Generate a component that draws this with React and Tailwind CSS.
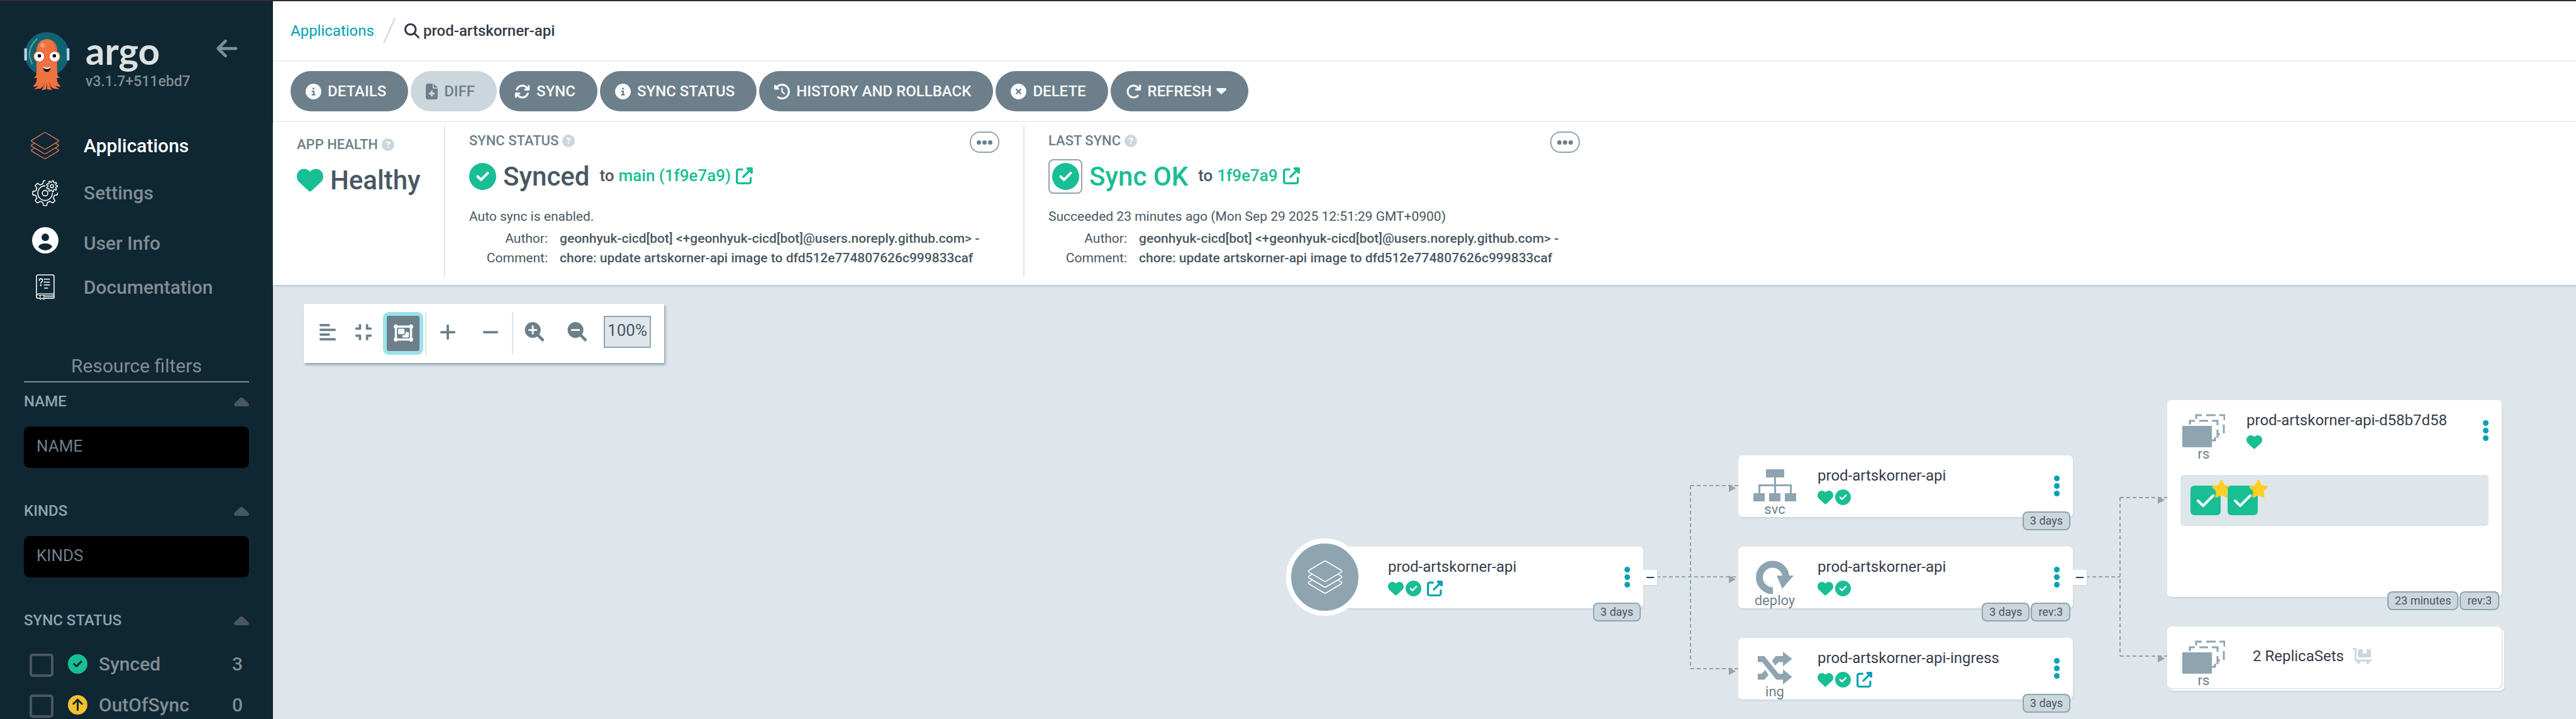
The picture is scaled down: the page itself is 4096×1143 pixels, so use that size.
import React from "react";
import {
  FaAlignLeft,
  FaArrowLeft,
  FaArrowRotateRight,
  FaArrowsRotate,
  FaCircleArrowUp,
  FaCircleCheck,
  FaCircleInfo,
  FaCircleQuestion,
  FaCircleXmark,
  FaClockRotateLeft,
  FaCompress,
  FaFileMedical,
  FaHeart,
  FaMagnifyingGlass,
  FaMinus,
  FaObjectGroup,
  FaPlus,
  FaStar,
  FaUpRightFromSquare,
} from "react-icons/fa6";

function Layers({ className, strokeWidth = 5 }) {
  return (
    <svg viewBox="0 0 174 171" className={className} fill="none" stroke="currentColor" strokeWidth={strokeWidth} strokeLinejoin="round" strokeLinecap="round" aria-hidden="true">
      <path d="M82 4q5-3 10 0l77 46q5 4 0 8l-77 46q-5 3-10 0L5 58q-5-4 0-8z" />
      <path d="M20 70L5 79q-5 4 0 8l77 46q5 3 10 0l77-46q5-4 0-8l-15-9" />
      <path d="M20 100l-15 9q-5 4 0 8l77 46q5 3 10 0l77-46q5-4 0-8l-15-9" />
    </svg>
  );
}

function gearPoints(cx, cy, outer, root, teeth, from, to) {
  const step = 360 / teeth;
  const offsets = [
    [-0.3, root],
    [-0.17, outer],
    [0, outer],
    [0.17, outer],
    [0.3, root],
    [0.4, root - 1],
  ];
  const pts = [];
  for (let i = -teeth; i <= teeth; i += 1) {
    offsets.forEach(([o, r]) => {
      const a = (i + o) * step;
      if (a >= from && a <= to) {
        const t = (a * Math.PI) / 180;
        pts.push(`${(cx + r * Math.cos(t)).toFixed(1)},${(cy + r * Math.sin(t)).toFixed(1)}`);
      }
    });
  }
  return pts.join(" ");
}

function Gears({ className }) {
  return (
    <svg viewBox="42 266 132 134" className={className} fill="none" stroke="currentColor" strokeWidth="5" strokeLinejoin="round" strokeLinecap="round" aria-hidden="true">
      <polyline points={gearPoints(107, 333, 63, 49, 8, 0, 270)} />
      <path d="M107 296a37 37 0 1 0 37 37" />
      <circle cx="107" cy="333" r="14" />
      <polygon strokeWidth="4.5" points={gearPoints(142, 298, 28, 21, 9, 0, 359)} />
      <circle cx="142" cy="298" r="8" strokeWidth="4.5" />
    </svg>
  );
}

function UserIcon({ className }) {
  return (
    <svg viewBox="0 0 134 134" className={className} aria-hidden="true">
      <circle cx="67" cy="67" r="67" fill="#fff" />
      <circle cx="67" cy="52" r="19" fill="#0f2733" />
      <path d="M31 100q10-17 36-17t36 17q-14 18-36 18t-36-18z" fill="#0f2733" />
    </svg>
  );
}

function DocsIcon({ className }) {
  return (
    <svg viewBox="0 0 96 132" className={className} fill="none" stroke="currentColor" strokeWidth="5" strokeLinejoin="round" strokeLinecap="round" aria-hidden="true">
      <path d="M20 123H12q-9 0-9-9V12q0-9 9-9h72q9 0 9 9v108q0 3-4 3H44" />
      <path d="M92 99H14q-9 2-9 10M92 107H46M92 115H46M14 107h8v22l10-7 9 7v-22M18 107h70" strokeWidth="4" />
      <path d="M42 25h28M42 40h28M42 55h28M44 71h16" />
      <path d="M17 32q1-9 8-9 9 0 9 8 0 5-5 8-4 3-4 7" />
      <circle cx="25" cy="56" r="2" />
    </svg>
  );
}

function ArgoLogo({ className }) {
  return (
    <svg viewBox="0 0 240 312" className={className} aria-hidden="true">
      <circle cx="120" cy="118" r="111" fill="#0b6670" stroke="#21577a" strokeWidth="8" />
      <rect x="2" y="88" width="14" height="64" rx="4" fill="#b7d4ec" />
      <rect x="224" y="88" width="14" height="64" rx="4" fill="#b7d4ec" />
      <path d="M68 40Q8 95 42 168" fill="none" stroke="#5a9a9f" strokeWidth="8" strokeLinecap="round" />
      <path d="M66 100C66 20 174 20 174 100V215Q176 238 190 244L172 242Q172 268 190 284L192 290L163 284L186 302L155 298Q136 292 132 262Q134 288 148 306L122 302L119 270L116 302L92 306Q106 288 108 262Q104 292 84 298L52 302L77 284L48 290L50 284Q68 268 68 242L50 244Q64 238 66 215Z" fill="#f0723f" />
      <path d="M140 50Q174 64 174 100V215Q162 170 162 100Q160 64 140 50Z" fill="#e9633c" />
      <circle cx="98" cy="72" r="12" fill="#f79a78" />
      <circle cx="80" cy="130" r="31" fill="#e2573a" />
      <circle cx="160" cy="130" r="31" fill="#e2573a" />
      <circle cx="80" cy="131" r="26" fill="#fff" />
      <circle cx="160" cy="131" r="26" fill="#fff" />
      <circle cx="81" cy="127" r="9" fill="#000" />
      <circle cx="159" cy="127" r="9" fill="#000" />
      <path d="M99 182Q120 196 141 182Q140 210 120 211Q101 210 99 182Z" fill="#111" />
      <path d="M99 182Q120 196 141 182L139 190Q120 203 101 190Z" fill="#fff" />
    </svg>
  );
}

function Caret({ className }) {
  return (
    <svg viewBox="0 0 24 15" className={className} fill="currentColor" aria-hidden="true">
      <path d="M2 15Q-1 13 1 10L10 1.500Q12 0 14 1.500L23 10Q25 13 22 15Z" />
    </svg>
  );
}

function FilledLens({ plus }) {
  return (
    <svg viewBox="0 0 32 32" className="h-[31px] w-[32px]" fill="none" aria-hidden="true">
      <circle cx="13" cy="13" r="13" fill="#6d7f8b" />
      <path d="M21 21l8 8" stroke="#6d7f8b" strokeWidth="5" strokeLinecap="round" />
      <path d={plus ? "M7 13h12M13 7v12" : "M7 13h12"} stroke="#fff" strokeWidth="3" strokeLinecap="round" />
    </svg>
  );
}

function FlatbedCart() {
  return (
    <svg viewBox="0 0 31 26" className="ml-[14px] h-[26px] w-[31px] text-[#ccd6dd]" fill="currentColor" aria-hidden="true">
      <path d="M1 1.500h2.500q1 0 1 1V18q0 2 2 2H29" fill="none" stroke="currentColor" strokeWidth="3" strokeLinecap="round" />
      <path d="M10 2h6v8l3-2 3 2V2h5q2 0 2 2v9q0 2-2 2H10q-2 0-2-2V4q0-2 2-2z" />
      <circle cx="9" cy="23" r="2.500" />
      <circle cx="24" cy="23" r="2.500" />
    </svg>
  );
}

const NAV = [
  { label: "Applications", icon: <Layers className="h-[44px] w-[45px] text-[#ef7b4d]" />, tone: "text-white" },
  { label: "Settings", icon: <Gears className="h-[42px] w-[42px] text-white" />, tone: "text-[#818d94]" },
  { label: "User Info", icon: <UserIcon className="h-[42px] w-[42px]" />, tone: "text-[#818d94] pt-[10px]" },
  { label: "Documentation", icon: <DocsIcon className="h-[41px] w-[30px] text-white" />, tone: "text-[#818d94]" },
];

function FilterHeading({ children }) {
  return (
    <button type="button" aria-expanded="true" className="flex h-[26px] w-full items-center justify-between text-[24px] leading-[26px] font-medium text-[#8fa4b1]">
      {children}
      <Caret className="h-[15px] w-[24px] text-[#495763]" />
    </button>
  );
}

function TextFilter({ name }) {
  return (
    <section className="mb-[55px]">
      <FilterHeading>{name}</FilterHeading>
      <input aria-label={name} placeholder={name} className="mt-[27px] block h-[66px] w-full rounded-[9px] bg-black px-[20px] pb-[4px] text-[26px] text-white placeholder:text-[#6d7f8b]" />
    </section>
  );
}

function StatusFilter({ label, count, icon }) {
  return (
    <label className="flex h-[65px] items-center pr-[10px] pl-[9px] text-[30px] font-medium text-[#818d94]">
      <input type="checkbox" className="mt-[3px] h-[37px] w-[38px] appearance-none rounded-[5px] border-4 border-[#495763]" />
      <span className="ml-[23px] text-[31px]">{icon}</span>
      <span className="ml-[18px] flex-1">{label}</span>
      <span>{count}</span>
    </label>
  );
}

function Sidebar() {
  return (
    <aside className="w-[434px] shrink-0 bg-[#0f2733] px-[38px]">
      <div className="flex h-[192px] pt-[48px]">
        <ArgoLogo className="h-[95px] w-[73px] shrink-0" />
        <div className="ml-[25px] flex-1">
          <div className="h-[68px] font-['Lato'] text-[60px] leading-[60px] font-bold text-[#dce0df]">argo</div>
          <div className="text-[23px] leading-[24px] font-medium text-[#818d94]">v3.1.7+511ebd7</div>
        </div>
        <button type="button" aria-label="Collapse sidebar" className="mr-[16px] h-[53px] text-[38px] text-[#818d94]">
          <FaArrowLeft />
        </button>
      </div>
      <nav>
        {NAV.map((item) => (
          <a key={item.label} href="#" className="flex h-[75px] items-center">
            <span className="flex w-[67px] justify-center">{item.icon}</span>
            <span className={"ml-[28px] text-[30px] leading-[40px] font-medium " + item.tone}>{item.label}</span>
          </a>
        ))}
      </nav>
      <div className="mt-[68px] border-b-2 border-[#818d94] pb-1 text-center text-[30px] leading-[40px] text-[#818d94]">Resource filters</div>
      <div className="pt-[17px]">
        <TextFilter name="NAME" />
        <TextFilter name="KINDS" />
        <section>
          <FilterHeading>SYNC STATUS</FilterHeading>
          <div className="mt-[24px]">
            <StatusFilter label="Synced" count="3" icon={<FaCircleCheck className="text-[#18be94]" />} />
            <StatusFilter label="OutOfSync" count="0" icon={<FaCircleArrowUp className="text-[#f4c030]" />} />
          </div>
        </section>
      </div>
    </aside>
  );
}

const ACTIONS = [
  { label: "DETAILS", Icon: FaCircleInfo },
  { label: "DIFF", Icon: FaFileMedical, disabled: true },
  { label: "SYNC", Icon: FaArrowsRotate },
  { label: "SYNC STATUS", Icon: FaCircleInfo },
  { label: "HISTORY AND ROLLBACK", Icon: FaClockRotateLeft },
  { label: "DELETE", Icon: FaCircleXmark },
  { label: "REFRESH", Icon: FaArrowRotateRight, caret: true },
];

function ActionBar() {
  return (
    <div className="flex gap-[4px] border-b-2 border-[#edf1f5] px-[28px] py-[15px]">
      {ACTIONS.map(({ label, Icon, disabled, caret }) => (
        <button
          key={label}
          type="button"
          disabled={disabled}
          className={
            "flex h-[64px] items-center rounded-full pr-[35px] pl-[24px] text-[24px] font-medium " +
            (disabled ? "bg-[#ccd6dd] text-[#6d7f8b]" : "bg-[#6d7f8b] text-[#f8fbfb]")
          }
        >
          <Icon className={"mr-[10px] h-[25px] " + (disabled ? "w-[19px]" : "w-[25px]")} />
          {label}
          {caret && <Caret className="ml-[7px] h-[10px] w-[16px] rotate-180" />}
        </button>
      ))}
    </div>
  );
}

function StatusTitle({ children, menu }) {
  return (
    <div className="flex h-[34px] items-start justify-between">
      <h3 className="flex items-center text-[22px] leading-[30px] font-medium text-[#6d7f8b]">
        {children}
        <FaCircleQuestion className="ml-[6px] text-[20px] text-[#ccd6dd]" />
      </h3>
      {menu && (
        <button type="button" aria-label="More" className="flex h-[34px] w-[47px] items-center justify-center gap-[2px] rounded-[16px] border-2 border-[#8fa4b1]">
          <span className="h-[7px] w-[7px] rounded-full bg-[#6d7f8b]" />
          <span className="h-[7px] w-[7px] rounded-full bg-[#6d7f8b]" />
          <span className="h-[7px] w-[7px] rounded-full bg-[#6d7f8b]" />
        </button>
      )}
    </div>
  );
}

function Revision({ children }) {
  return (
    <span className="ml-[16px] flex items-center pb-[2px] text-[26px] font-medium text-[#495763]">
      to
      <a href="#" className="ml-[7px] flex items-center text-[#18be94]">
        {children}
        <FaUpRightFromSquare className="ml-[8px] text-[27px]" />
      </a>
    </span>
  );
}

function Commit({ summary }) {
  return (
    <div className="mt-[23px] text-[21px] text-[#495763]">
      <p className="leading-[26px]">{summary}</p>
      <dl className="mt-[7px] grid grid-cols-[125px_1fr] gap-x-[19px] leading-[31px]">
        <dt className="text-right">Author:</dt>
        <dd className="font-medium">{"geonhyuk-cicd[bot] <+geonhyuk-cicd[bot]@users.noreply.github.com> -"}</dd>
        <dt className="text-right">Comment:</dt>
        <dd className="font-medium">chore: update artskorner-api image to dfd512e774807626c999833caf</dd>
      </dl>
    </div>
  );
}

function StatusPanel() {
  return (
    <div className="relative z-10 flex h-[259px] bg-white pt-[6px] pb-[13px] shadow-[1px_2px_3px_#b9c6ce]">
      <section className="w-[274px] border-r-2 border-[#dee6eb] pt-[15px] pl-[38px]">
        <StatusTitle>APP HEALTH</StatusTitle>
        <div className="mt-[9px] flex h-[56px] items-center text-[42px] font-medium text-[#495763]">
          <FaHeart className="mr-[11px] text-[42px] text-[#18be94]" />
          Healthy
        </div>
      </section>
      <section className="w-[921px] border-r-2 border-[#dee6eb] px-[38px] pt-[9px]">
        <StatusTitle menu>SYNC STATUS</StatusTitle>
        <div className="mt-[9px] flex h-[56px] items-center text-[42px] font-medium text-[#495763]">
          <FaCircleCheck className="mr-[11px] text-[43px] text-[#18be94]" />
          Synced
          <Revision>main (1f9e7a9)</Revision>
        </div>
        <Commit summary="Auto sync is enabled." />
      </section>
      <section className="w-[921px] px-[38px] pt-[9px]">
        <StatusTitle menu>LAST SYNC</StatusTitle>
        <div className="mt-[9px] flex h-[56px] items-center text-[42px] font-medium text-[#18be94]">
          <button type="button" aria-label="Sync result" className="mr-[11px] flex h-[55px] w-[54px] items-center justify-center rounded-[8px] border-2 border-[#8fa4b1] text-[43px]">
            <FaCircleCheck />
          </button>
          Sync OK
          <Revision>1f9e7a9</Revision>
        </div>
        <Commit summary="Succeeded 23 minutes ago (Mon Sep 29 2025 12:51:29 GMT+0900)" />
      </section>
    </div>
  );
}

function ToolButton({ label, wide, children }) {
  return (
    <button type="button" aria-label={label} className={"flex h-[60px] items-center justify-center " + (wide ? "w-[68px]" : "w-[57px]")}>
      {children}
    </button>
  );
}

function Toolbar() {
  return (
    <div className="mt-[30px] ml-[49px] flex h-[94px] w-fit items-center bg-white pr-[21px] pb-[5px] pl-[9px] text-[#6d7f8b] shadow-[2px_3px_4px_#8fa4b1]">
      <ToolButton label="Align"><FaAlignLeft className="text-[30px]" /></ToolButton>
      <ToolButton label="Compress"><FaCompress className="text-[30px]" /></ToolButton>
      <button type="button" aria-label="Group nodes" aria-pressed="true" className="mt-[4px] ml-[3px] flex h-[68px] w-[64px] items-center justify-center rounded-[9px] border-[6px] border-[#9ae3eb] bg-[#6d7f8b] text-[31px] text-[#f8fbfb]">
        <FaObjectGroup />
      </button>
      <div className="mt-[4px] ml-[3px] h-[68px] w-[2px] bg-[#dee6eb]" />
      <ToolButton label="Expand all" wide><FaPlus className="text-[30px]" /></ToolButton>
      <ToolButton label="Collapse all" wide><FaMinus className="text-[30px]" /></ToolButton>
      <div className="mt-[4px] h-[68px] w-[2px] bg-[#dee6eb]" />
      <ToolButton label="Zoom in" wide><FilledLens plus /></ToolButton>
      <ToolButton label="Zoom out" wide><FilledLens /></ToolButton>
      <div className="ml-[8px] flex h-[51px] w-[75px] items-center justify-center border-2 border-[#8fa4b1] bg-[#dee6eb] pb-[4px] text-[26px] text-[#495763]">100%</div>
    </div>
  );
}

function ServiceIcon() {
  return (
    <svg viewBox="0 0 68 52" className="h-[52px] w-[68px]" fill="currentColor" aria-hidden="true">
      <path d="M20 0h29v13H20zM33 13h3v25h-3zM8 24h53v3H8zM8 24h3v14H8zM58 24h3v14h-3zM0 38h18v13H0zM25 38h18v13H25zM50 38h18v13H50z" />
    </svg>
  );
}

function DeployIcon() {
  return (
    <svg viewBox="0 0 60 54" className="h-[54px] w-[60px]" fill="currentColor" aria-hidden="true">
      <path d="M27 48A21 21 0 1 1 47.500 25" fill="none" stroke="currentColor" strokeWidth="11" />
      <path d="M33 24h27L42 45z" />
    </svg>
  );
}

function IngressIcon() {
  return (
    <svg viewBox="0 0 55 52" className="h-[52px] w-[55px]" fill="currentColor" aria-hidden="true">
      <path d="M0 7H10.400L33 35H40V28L54.500 40L40 52V44.600H29.500L7 16.400H0Z" />
      <path d="M40 0L54.500 11.300L40 23.300V16.400H33L27.700 22L22.500 14.500L28.600 7H40Z" />
      <path d="M0 35H6L12 29.200L17.300 36.800L10.400 44.600H0Z" />
    </svg>
  );
}

function ReplicaSetIcon() {
  return (
    <svg viewBox="0 0 68 53" className="h-[53px] w-[68px]" fill="none" stroke="currentColor" strokeWidth="3" aria-hidden="true">
      <rect x="0" y="19" width="47" height="34" rx="1" fill="currentColor" stroke="none" />
      <path d="M12 17V11h8M27 11h14M47 11h9v7M56 25v13M52 37v5h-5M57 32h3" />
      <path d="M22 8V2h9M38 2h15M59 2h8v8M66 17v14" />
    </svg>
  );
}

function Badges({ items }) {
  return (
    <div className="absolute right-[4px] -bottom-[21px] flex gap-[2px]">
      {items.map((item) => (
        <span key={item} className="flex h-[30px] items-center rounded-[8px] border-2 border-[#8fa4b1] bg-[#ccd6dd] px-[10px] text-[18px] leading-[26px] text-[#495763]">{item}</span>
      ))}
    </div>
  );
}

function NodeMenu() {
  return (
    <button type="button" aria-label="Node menu" className="absolute top-[32px] right-[21px] flex flex-col gap-[3px]">
      <span className="h-[9px] w-[9px] rounded-full bg-[#00a2b3]" />
      <span className="h-[9px] w-[9px] rounded-full bg-[#00a2b3]" />
      <span className="h-[9px] w-[9px] rounded-full bg-[#00a2b3]" />
    </button>
  );
}

function CollapseToggle() {
  return (
    <button type="button" aria-label="Collapse" className="absolute top-[37px] left-full flex h-[24px] w-[22px] items-center justify-center bg-white shadow-[1px_1px_1px_#ccd6dd]">
      <span className="h-[2px] w-[12px] bg-[#363c4a]" />
    </button>
  );
}

function NodeKind({ icon, kind }) {
  return (
    <div className="flex w-[116px] flex-col items-center pt-[22px]">
      {icon && <div className="h-[51px] text-[#8fa4b1]">{icon}</div>}
      <span className="text-[22px] leading-[26px] text-[#6d7f8b]">{kind}</span>
    </div>
  );
}

function Node({ place, icon, kind, title, synced, link, badges, toggle, children }) {
  return (
    <article className={"absolute w-[532px] rounded-[7px] bg-white shadow-[1px_2px_2px_#ccd6dd] " + place}>
      <div className="flex">
        <NodeKind icon={icon} kind={kind} />
        <div className="ml-[10px] pt-[17px]">
          <h4 className="text-[24px] leading-[30px] text-[#363c4a]">{title}</h4>
          <div className="mt-[6px] flex h-[26px] items-center gap-[3px] text-[25px] text-[#18be94]">
            <FaHeart />
            {synced && <FaCircleCheck />}
            {link && (
              <a href="#" aria-label="Open application" className="ml-[6px] text-[#00a2b3]">
                <FaUpRightFromSquare />
              </a>
            )}
          </div>
        </div>
      </div>
      {children}
      <NodeMenu />
      <Badges items={badges} />
      {toggle && <CollapseToggle />}
    </article>
  );
}

function Pod() {
  return (
    <div className="relative flex h-[47px] w-[48px] items-center justify-center rounded-[6px] bg-[#18be94]">
      <svg viewBox="0 0 28 20" className="h-[20px] w-[28px]" fill="none" stroke="#fff" strokeWidth="4" strokeLinecap="round" strokeLinejoin="round" aria-hidden="true">
        <path d="M2 10l8 8L26 2" />
      </svg>
      <FaStar className="absolute -top-[11px] -right-[17px] text-[32px] text-[#ffce25]" />
    </div>
  );
}

function Edges() {
  return (
    <svg className="absolute inset-0 h-full w-full" fill="none" aria-hidden="true">
      <g stroke="#8fa4b1" strokeWidth="2" strokeDasharray="6 4">
        <path d="M2200 464H2330M2254 319H2330M2254 610H2330M2254 319V610" />
        <path d="M2883 464H2937M2937 338H3012M2937 590H3012M2937 338V590" />
      </g>
      <g fill="#a0a0a0">
        <path d="M2315 317l11 6-11 6zM2315 462l11 6-11 6zM2315 608l11 6-11 6z" />
        <path d="M2997 336l11 6-11 6zM2997 588l11 6-11 6z" />
      </g>
    </svg>
  );
}

function Canvas() {
  return (
    <div className="relative flex-1 overflow-hidden bg-[#dee6eb]">
      <Edges />
      <Toolbar />
      <Node place="left-[1647px] top-[416px] h-[98px]" title="prod-artskorner-api" synced link badges={["3 days"]} toggle>
        <div className="absolute -top-[13px] -left-[36px] flex h-[123px] w-[123px] items-center justify-center rounded-full border-8 border-white bg-[#8fa4b1]">
          <Layers className="h-[54px] w-[56px] text-white" strokeWidth={5} />
        </div>
      </Node>
      <Node place="left-[2330px] top-[271px] h-[98px]" icon={<ServiceIcon />} kind="svc" title="prod-artskorner-api" synced badges={["3 days"]} />
      <Node place="left-[2330px] top-[416px] h-[98px]" icon={<DeployIcon />} kind="deploy" title="prod-artskorner-api" synced badges={["3 days", "rev:3"]} toggle />
      <Node place="left-[2330px] top-[561px] h-[98px]" icon={<IngressIcon />} kind="ing" title="prod-artskorner-api-ingress" synced link badges={["3 days"]} />
      <Node place="left-[3012px] top-[183px] h-[313px]" icon={<ReplicaSetIcon />} kind="rs" title="prod-artskorner-api-d58b7d58" badges={["23 minutes", "rev:3"]}>
        <div className="mx-[21px] mt-[20px] flex h-[81px] items-center gap-[11px] rounded-[5px] bg-[#dee6eb] pl-[16px]">
          <Pod />
          <Pod />
        </div>
      </Node>
      <article className="absolute top-[543px] left-[3012px] flex h-[98px] w-[532px] rounded-[7px] bg-white shadow-[1px_1px_1px_#ccd6dd,4px_4px_0_#fff,5px_6px_2px_#ccd6dd]">
        <NodeKind icon={<ReplicaSetIcon />} kind="rs" />
        <div className="ml-[20px] flex items-center pb-[4px] text-[24px] text-[#363c4a]">
          2 ReplicaSets
          <FlatbedCart />
        </div>
      </article>
    </div>
  );
}

export default function App() {
  return (
    <div className="flex h-screen overflow-hidden border-t-2 border-[#2f2c35] bg-white font-['Roboto',sans-serif]">
      <Sidebar />
      <main className="flex min-w-0 flex-1 flex-col">
        <header className="flex h-[96px] items-center border-b-2 border-[#edf1f5] px-[28px] text-[24px] text-[#363c4a]">
          <a href="#" className="text-[#00a2b3]">Applications</a>
          <svg viewBox="0 0 20 42" className="mx-[14px] h-[42px] w-[20px]" aria-hidden="true">
            <path d="M19 1L1 41" stroke="#ccd6dd" strokeWidth="2" />
          </svg>
          <FaMagnifyingGlass className="text-[24px]" />
          <span className="ml-[6px] font-medium">prod-artskorner-api</span>
        </header>
        <ActionBar />
        <StatusPanel />
        <Canvas />
      </main>
    </div>
  );
}
